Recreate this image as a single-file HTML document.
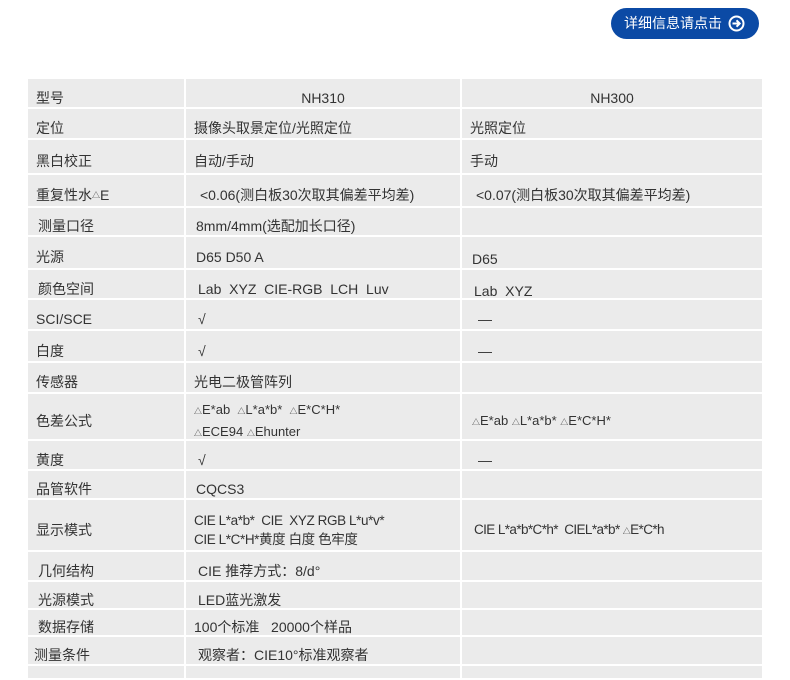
<!DOCTYPE html>
<html><head><meta charset="utf-8"><style>
body{margin:0;width:790px;height:678px;background:#fff;overflow:hidden;font-family:"Liberation Sans","Noto Sans CJK SC",sans-serif;color:#333;font-size:14px;position:relative}
.btn{position:absolute;left:611px;top:8px;width:148px;height:31px;border-radius:16px;background:#0b4aa5;color:#fff;font-size:14px;line-height:31px;box-sizing:border-box;padding-left:13px}
.btn svg{position:absolute;right:14px;top:7px}
.r{position:absolute;left:28px;width:734px}
.r>div{position:absolute;top:0;bottom:2px;background:#ebebeb;display:flex;align-items:center;padding-top:10px;box-sizing:border-box;white-space:nowrap;line-height:17px}
.a{left:0;width:156px;padding-left:8px}
.b{left:158px;width:274px;padding-left:10px}
.d{left:434px;width:300px;padding-left:10px}
.c{justify-content:center;padding-left:0!important}
small{font-size:8px}
</style></head><body>
<div class="btn">详细信息请点击<svg width="17" height="17" viewBox="0 0 17 17"><circle cx="8.5" cy="8.5" r="7" fill="none" stroke="#fff" stroke-width="2"/><path d="M4.5 8.5H11.5M8.5 5.3L11.7 8.5L8.5 11.7" fill="none" stroke="#fff" stroke-width="2"/></svg></div>

<div class="r" style="top:79px;height:30px"><div class="a">型号</div><div class="b c">NH310</div><div class="d c">NH300</div></div>
<div class="r" style="top:109px;height:31px"><div class="a">定位</div><div class="b" style="padding-left:8px">摄像头取景定位/光照定位</div><div class="d" style="padding-left:8px">光照定位</div></div>
<div class="r" style="top:140px;height:35px"><div class="a">黑白校正</div><div class="b" style="padding-left:8px">自动/手动</div><div class="d" style="padding-left:8px">手动</div></div>
<div class="r" style="top:175px;height:33px"><div class="a">重复性水<small>△</small>E</div><div class="b" style="padding-left:14px">&lt;0.06(测白板30次取其偏差平均差)</div><div class="d" style="padding-left:14px">&lt;0.07(测白板30次取其偏差平均差)</div></div>
<div class="r" style="top:208px;height:29px"><div class="a" style="padding-left:10px">测量口径</div><div class="b">8mm/4mm(选配加长口径)</div><div class="d"></div></div>
<div class="r" style="top:237px;height:33px"><div class="a">光源</div><div class="b">D65 D50 A</div><div class="d" style="padding-top:14px">D65</div></div>
<div class="r" style="top:270px;height:30px"><div class="a" style="padding-left:10px">颜色空间</div><div class="b" style="padding-left:12px">Lab&nbsp; XYZ&nbsp; CIE-RGB&nbsp; LCH&nbsp; Luv</div><div class="d" style="padding-top:14px;padding-left:12px">Lab&nbsp; XYZ</div></div>
<div class="r" style="top:300px;height:31px"><div class="a">SCI/SCE</div><div class="b" style="padding-left:12px">√</div><div class="d" style="padding-left:16px">—</div></div>
<div class="r" style="top:331px;height:32px"><div class="a">白度</div><div class="b" style="padding-left:12px">√</div><div class="d" style="padding-left:16px">—</div></div>
<div class="r" style="top:363px;height:31px"><div class="a">传感器</div><div class="b" style="padding-left:8px">光电二极管阵列</div><div class="d"></div></div>
<div class="r" style="top:394px;height:47px"><div class="a">色差公式</div><div class="b" style="padding-left:8px;font-size:13px;line-height:20px"><span><small>△</small>E*ab&nbsp; <small>△</small>L*a*b*&nbsp; <small>△</small>E*C*H*<br><small>△</small>ECE94 <small>△</small>Ehunter</span></div><div class="d" style="font-size:13px"><span><small>△</small>E*ab <small>△</small>L*a*b* <small>△</small>E*C*H*</span></div></div>
<div class="r" style="top:441px;height:30px"><div class="a">黄度</div><div class="b" style="padding-left:12px">√</div><div class="d" style="padding-left:16px">—</div></div>
<div class="r" style="top:471px;height:29px"><div class="a">品管软件</div><div class="b">CQCS3</div><div class="d"></div></div>
<div class="r" style="top:500px;height:52px"><div class="a">显示模式</div><div class="b" style="padding-left:8px;letter-spacing:-0.4px;font-size:13.5px;line-height:19px"><span>CIE L*a*b*&nbsp; CIE&nbsp; XYZ RGB L*u*v*<br>CIE L*C*H*黄度 白度 色牢度</span></div><div class="d" style="padding-left:12px;letter-spacing:-0.6px;font-size:13.5px"><span>CIE L*a*b*C*h*&nbsp; CIEL*a*b* <small>△</small>E*C*h</span></div></div>
<div class="r" style="top:552px;height:30px"><div class="a" style="padding-left:10px">几何结构</div><div class="b" style="padding-left:12px">CIE 推荐方式：8/d°</div><div class="d"></div></div>
<div class="r" style="top:582px;height:28px"><div class="a" style="padding-left:10px">光源模式</div><div class="b" style="padding-left:12px">LED蓝光激发</div><div class="d"></div></div>
<div class="r" style="top:610px;height:27px"><div class="a" style="padding-left:10px">数据存储</div><div class="b" style="padding-left:8px">100个标准&nbsp;&nbsp; 20000个样品</div><div class="d"></div></div>
<div class="r" style="top:637px;height:29px"><div class="a" style="padding-left:6px">测量条件</div><div class="b" style="padding-left:12px">观察者：CIE10°标准观察者</div><div class="d"></div></div>
<div class="r" style="top:666px;height:14px"><div class="a"></div><div class="b"></div><div class="d"></div></div>
</body></html>
